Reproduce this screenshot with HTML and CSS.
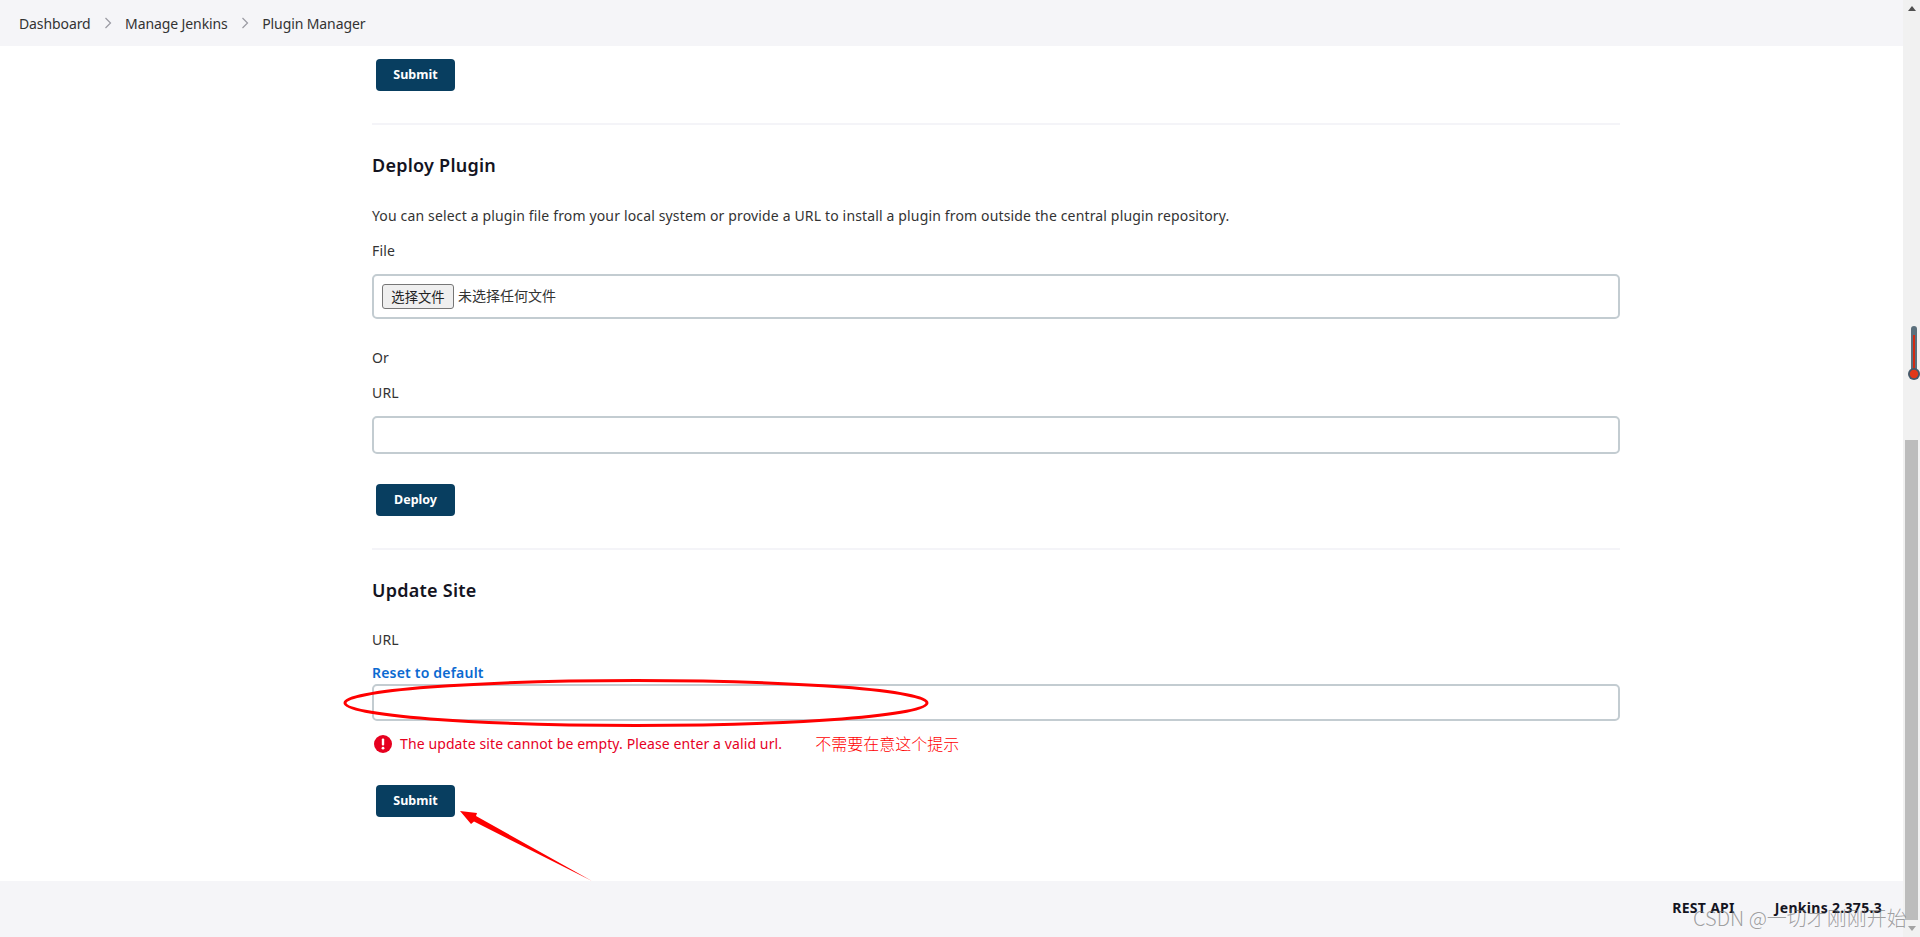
FILE: index.html
```html
<!DOCTYPE html>
<html lang="en">
<head>
<meta charset="utf-8">
<title>Plugin Manager</title>
<link rel="stylesheet" href="styles.css">
</head>
<body>
<div class="app">
  <div class="page">
    <header class="topbar">
      <span class="crumb">Dashboard</span>
      <svg class="chev" viewBox="0 0 8 12"><path d="M1.5 1 L6.5 6 L1.5 11"/></svg>
      <span class="crumb">Manage Jenkins</span>
      <svg class="chev" viewBox="0 0 8 12"><path d="M1.5 1 L6.5 6 L1.5 11"/></svg>
      <span class="crumb">Plugin Manager</span>
    </header>
    <main class="main">
      <button class="btn btn-first">Submit</button>
      <hr class="rule">
      <h2 class="title">Deploy Plugin</h2>
      <p class="line intro">You can select a plugin file from your local system or provide a URL to install a plugin from outside the central plugin repository.</p>
      <p class="line label">File</p>
      <div class="box file-box">
        <span class="file-btn">选择文件</span>
        <span class="file-name">未选择任何文件</span>
      </div>
      <p class="line or">Or</p>
      <p class="line label">URL</p>
      <div class="box url-box"></div>
      <button class="btn btn-deploy">Deploy</button>
      <hr class="rule">
      <h2 class="title">Update Site</h2>
      <p class="line label-site">URL</p>
      <a class="line reset">Reset to default</a>
      <div class="box site-box"></div>
      <div class="line error">
        <svg class="err-icon" viewBox="0 0 18 18"><circle cx="9" cy="9" r="9"/><rect x="7.8" y="3.6" width="2.4" height="7" rx="1"/><circle cx="9" cy="13.2" r="1.4"/></svg>
        <span>The update site cannot be empty. Please enter a valid url.</span>
        <span class="note">不需要在意这个提示</span>
      </div>
      <button class="btn btn-last">Submit</button>
    </main>
    <footer class="footer">
      <span class="foot-link">REST API</span>
      <span class="foot-link">Jenkins 2.375.3</span>
    </footer>
  </div>
  <aside class="scrollbar">
    <svg class="sb-arrow" viewBox="0 0 8 5"><path d="M4 0 L8 5 L0 5 Z"/></svg>
    <div class="sb-track"><div class="sb-thumb"></div></div>
    <svg class="sb-arrow sb-down" viewBox="0 0 8 5"><path d="M0 0 L8 0 L4 5 Z"/></svg>
  </aside>
</div>
<svg class="markup" viewBox="0 0 1920 881">
  <ellipse cx="636" cy="703" rx="291" ry="22.5"/>
  <path class="arrow" d="M460 811 L477 813 L476 816 L592 881 L474 821.5 L471 824 Z"/>
</svg>
<svg class="thermo" viewBox="0 0 14 56">
  <rect x="4" y="1" width="6" height="48" rx="3" fill="#5b6f7c"/>
  <rect x="6" y="10" width="2" height="38" fill="#d42a12"/>
  <circle cx="7" cy="49" r="6" fill="#45596a"/>
  <circle cx="7" cy="49" r="4.2" fill="#e2391a"/>
</svg>
<div class="watermark">CSDN @一切才刚刚开始</div>
</body>
</html>
```
FILE: styles.css
```css
* { box-sizing: border-box; }
html, body { margin: 0; height: 100%; overflow: hidden; }
body {
  font-family: "Noto Sans", "Noto Sans CJK SC", sans-serif;
  font-size: 14px;
  color: #333;
  background: #fff;
}
.app { display: flex; height: 937px; }
.page { flex: 1; display: flex; flex-direction: column; min-width: 0; }

.topbar {
  height: 46px;
  background: #f5f5f8;
  display: flex;
  align-items: center;
  padding-left: 19px;
  color: #333;
}
.crumb { font-size: 14px; letter-spacing: -0.1px; }
.chev { width: 8px; height: 12px; margin: 0 13.5px 0 13px; }
.chev path { fill: none; stroke: #9a9aa2; stroke-width: 1.2; }

.main {
  flex: 1;
  padding: 13px 0 0 372px;
  width: 1620px;
}
.line { display: block; margin: 0; line-height: 20px; letter-spacing: 0.15px; }
.btn {
  display: block;
  width: 79px;
  height: 32px;
  margin-left: 4px;
  padding: 0;
  border: 0;
  border-radius: 4px;
  background: #083e60;
  color: #fff;
  font: 700 12.5px/32px "Noto Sans", sans-serif;
}
.btn-deploy { margin-top: 30px; }
.btn-last { margin-top: 31px; }
.rule { height: 2px; margin: 32px 0 0; border: 0; background: #f4f4f8; }
.title {
  margin: 28px 0 0;
  font-size: 18px;
  font-weight: 600;
  line-height: 24px;
  letter-spacing: 0.25px;
  color: #14141f;
}
.intro { margin-top: 29px; }
.label { margin-top: 15px; }
.or { margin-top: 29px; }
.label-site { margin-top: 28px; }
.reset { margin-top: 13px; color: #0b6ad1; font-weight: 600; font-size: 14px; letter-spacing: 0.2px; }

.box {
  border: 2px solid #c3ccd1;
  border-radius: 5px;
  background: #fff;
  margin-top: 13px;
}
.file-box { height: 45px; display: flex; align-items: center; padding-left: 8px; color: #333; }
.file-btn {
  width: 72px;
  height: 25px;
  border: 1px solid #767676;
  border-radius: 3px;
  background: #efefef;
  font-size: 13.33px;
  line-height: 25px;
  text-align: center;
  color: #222;
}
.file-name { margin-left: 4px; font-size: 14px; line-height: 18px; padding-bottom: 2px; }
.url-box { height: 38px; }
.site-box { height: 37px; margin-top: 1px; }

.error {
  display: flex;
  align-items: center;
  margin-top: 13px;
  padding-left: 2px;
  color: #e6001f;
  letter-spacing: 0.11px;
}
.err-icon { width: 18px; height: 18px; margin-right: 8px; }
.err-icon circle:first-child { fill: #e6001f; }
.err-icon rect, .err-icon circle:last-child { fill: #fff; }
.note { margin-left: 33px; color: #f00; font-size: 16px; font-weight: 300; letter-spacing: 0; font-family: "Noto Sans CJK SC", sans-serif; position: relative; top: -1px; }

.footer {
  height: 56px;
  background: #f5f5f8;
  display: flex;
  justify-content: flex-end;
  align-items: center;
  gap: 40px;
  padding: 0 21px 4px 0;
}
.foot-link { font-weight: 700; font-size: 14px; color: #14141f; letter-spacing: 0.3px; }

.scrollbar {
  width: 17px;
  background: #f1f1f1;
  display: flex;
  flex-direction: column;
  align-items: center;
}
.sb-arrow { width: 8px; height: 5px; flex: none; margin: 6px 0; fill: #505050; }
.sb-down { fill: #a3a3a3; }
.sb-track { flex: 1; width: 100%; padding: 423px 2px 0; }
.sb-thumb { height: 480px; background: #bcbcbc; }

.markup {
  position: absolute;
  left: 0;
  top: 0;
  width: 1920px;
  height: 881px;
  pointer-events: none;
}
.markup ellipse { fill: none; stroke: #f00; stroke-width: 3; }
.markup .arrow { fill: #f00; }
.thermo { position: absolute; left: 1907px; top: 325px; width: 14px; height: 56px; }
.watermark {
  position: absolute;
  left: 1693px;
  top: 905px;
  font-family: "Noto Sans CJK SC", sans-serif;
  font-size: 20px;
  line-height: 26px;
  font-weight: 300;
  color: rgba(110, 110, 110, 0.65);
  white-space: nowrap;
}
```
